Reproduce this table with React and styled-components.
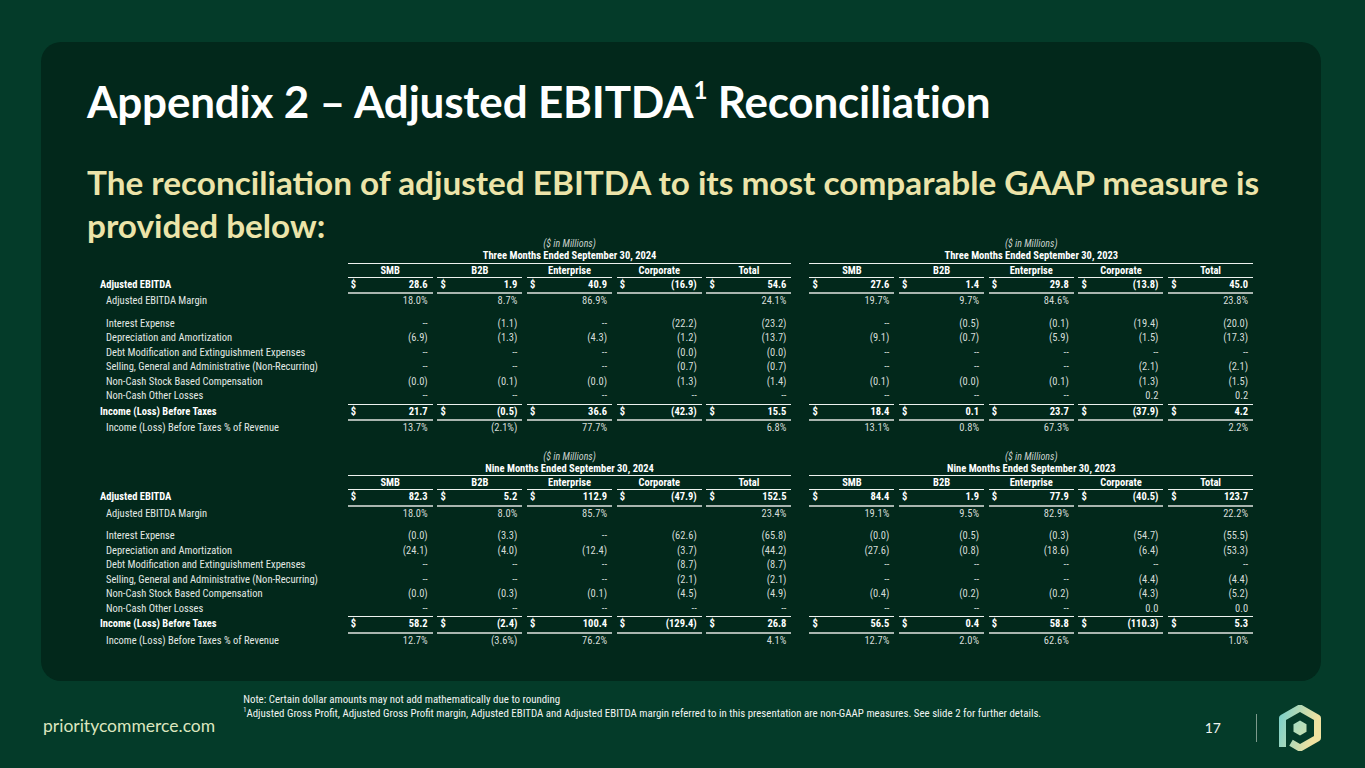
import React from 'react'
import styled, { createGlobalStyle } from 'styled-components'

const GlobalStyle = createGlobalStyle`
  html, body {
    margin: 0;
    padding: 0;
    background: #043b29;
  }
  body {
    font-family: "Lato", "Liberation Sans", sans-serif;
  }
`

const Page = styled.div`
  width: 1365px;
  height: 768px;
  display: flex;
  flex-direction: column;
  background: #043b29;
  overflow: hidden;
`

const Panel = styled.section`
  margin: 42px 44px 0 41px;
  height: 639px;
  box-sizing: border-box;
  padding: 33px 0 0 46px;
  border-radius: 20px;
  background: #02281b;
  display: flex;
  flex-direction: column;
`

const Title = styled.h1`
  margin: 0;
  font-family: "Lato", sans-serif;
  font-weight: 700;
  font-size: 44px;
  line-height: 52px;
  color: #ffffff;
  letter-spacing: -0.2px;
`

const Sup = styled.sup`
  font-size: 0.55em;
  line-height: 0;
  position: relative;
  top: -0.15em;
`

const Subtitle = styled.h2`
  margin: 34px 0 0;
  font-family: "Lato", sans-serif;
  font-weight: 700;
  font-size: 33.3px;
  line-height: 43px;
  color: #ece4a9;
  white-space: nowrap;
`

const Tables = styled.div`
  margin: -10px 0 0 13px;
  display: flex;
  flex-direction: column;
  gap: 14px;
`

const Grid = styled.div`
  display: grid;
  grid-template-columns: 243px repeat(5, 85px) 8.6px repeat(5, 85px);
  column-gap: 4.7px;
  font-family: "Liberation Sans Narrow", "Roboto Condensed", "Liberation Sans", sans-serif;
  font-size: 10.5px;
  color: #d5dcd8;
`

const groupColumn = { a: '2 / span 5', b: '8 / span 5' }

const Caption = styled.div`
  grid-column: ${p => groupColumn[p.$group]};
  text-align: center;
  font-style: italic;
  font-size: 10px;
  line-height: 13px;
  color: #c9d1cc;
`

const Period = styled.div`
  grid-column: ${p => groupColumn[p.$group]};
  text-align: center;
  font-weight: 700;
  line-height: 12.5px;
  color: #ffffff;
  border-bottom: 1px solid #eef2ef;
`

const ColHead = styled.div`
  text-align: center;
  font-weight: 700;
  line-height: 13px;
  color: #ffffff;
  border-bottom: 1px solid #eef2ef;
`

const Label = styled.div`
  grid-column: 1;
  line-height: 14.5px;
  padding-left: ${p => (p.$bold ? '0' : '6px')};
  font-weight: ${p => (p.$bold ? 700 : 400)};
  color: ${p => (p.$bold ? '#ffffff' : '#e3e8e5')};
  white-space: nowrap;
  border-top: ${p => (p.$top ? '1px solid transparent' : 'none')};
  border-bottom: ${p => (p.$thick ? '2px solid transparent' : 'none')};
`

const Value = styled.div`
  display: flex;
  justify-content: space-between;
  line-height: 14.5px;
  padding: 0 5px 0 3px;
  font-weight: ${p => (p.$bold ? 700 : 400)};
  color: ${p => (p.$bold ? '#ffffff' : '#d5dcd8')};
  border-top: ${p => (p.$top ? '1px solid #eef2ef' : 'none')};
  border-bottom: ${p => (p.$thick ? '2px solid #a9b5af' : 'none')};
`

const Gutter = styled.div`
  border-top: ${p => (p.$top ? '1px solid transparent' : 'none')};
  border-bottom: ${p => (p.$thick ? '2px solid transparent' : 'none')};
`

const Spacer = styled.div`
  grid-column: 1 / -1;
  height: 8px;
`

const Footer = styled.footer`
  flex: 1;
  display: flex;
  align-items: center;
  padding: 0 43px 0 43px;
`

const Site = styled.div`
  font-family: "Lato", sans-serif;
  font-size: 17.5px;
  color: #dce6bf;
  margin-right: 28px;
  padding-top: 2px;
`

const Note = styled.div`
  align-self: flex-start;
  margin-top: 12px;
  font-family: "Liberation Sans Narrow", "Roboto Condensed", "Liberation Sans", sans-serif;
  font-size: 10.9px;
  line-height: 14px;
  color: #f1f4f2;
`

const NoteSup = styled.sup`
  font-size: 6.5px;
  line-height: 0;
`

const PageInfo = styled.div`
  margin-left: auto;
  display: flex;
  align-items: center;
  padding-top: 6px;
`

const PageNumber = styled.span`
  font-family: "Lato", sans-serif;
  font-size: 14px;
  color: #eef3ef;
`

const Divider = styled.span`
  width: 1px;
  height: 28px;
  background: #7d9a8c;
  margin: 0 21px 0 35px;
`

const columns = ['SMB', 'B2B', 'Enterprise', 'Corporate', 'Total']

const dash = '--'

const quarter = {
  periods: ['Three Months Ended September 30, 2024', 'Three Months Ended September 30, 2023'],
  rows: [
    { label: 'Adjusted EBITDA', bold: true, dollar: true, thick: true,
      a: ['28.6', '1.9', '40.9', '(16.9)', '54.6'], b: ['27.6', '1.4', '29.8', '(13.8)', '45.0'] },
    { label: 'Adjusted EBITDA Margin',
      a: ['18.0%', '8.7%', '86.9%', '', '24.1%'], b: ['19.7%', '9.7%', '84.6%', '', '23.8%'] },
    { spacer: true },
    { label: 'Interest Expense',
      a: [dash, '(1.1)', dash, '(22.2)', '(23.2)'], b: [dash, '(0.5)', '(0.1)', '(19.4)', '(20.0)'] },
    { label: 'Depreciation and Amortization',
      a: ['(6.9)', '(1.3)', '(4.3)', '(1.2)', '(13.7)'], b: ['(9.1)', '(0.7)', '(5.9)', '(1.5)', '(17.3)'] },
    { label: 'Debt Modification and Extinguishment Expenses',
      a: [dash, dash, dash, '(0.0)', '(0.0)'], b: [dash, dash, dash, dash, dash] },
    { label: 'Selling, General and Administrative (Non-Recurring)',
      a: [dash, dash, dash, '(0.7)', '(0.7)'], b: [dash, dash, dash, '(2.1)', '(2.1)'] },
    { label: 'Non-Cash Stock Based Compensation',
      a: ['(0.0)', '(0.1)', '(0.0)', '(1.3)', '(1.4)'], b: ['(0.1)', '(0.0)', '(0.1)', '(1.3)', '(1.5)'] },
    { label: 'Non-Cash Other Losses',
      a: [dash, dash, dash, dash, dash], b: [dash, dash, dash, '0.2', '0.2'] },
    { label: 'Income (Loss) Before Taxes', bold: true, dollar: true, top: true, thick: true,
      a: ['21.7', '(0.5)', '36.6', '(42.3)', '15.5'], b: ['18.4', '0.1', '23.7', '(37.9)', '4.2'] },
    { label: 'Income (Loss) Before Taxes % of Revenue',
      a: ['13.7%', '(2.1%)', '77.7%', '', '6.8%'], b: ['13.1%', '0.8%', '67.3%', '', '2.2%'] }
  ]
}

const nineMonths = {
  periods: ['Nine Months Ended September 30, 2024', 'Nine Months Ended September 30, 2023'],
  rows: [
    { label: 'Adjusted EBITDA', bold: true, dollar: true, thick: true,
      a: ['82.3', '5.2', '112.9', '(47.9)', '152.5'], b: ['84.4', '1.9', '77.9', '(40.5)', '123.7'] },
    { label: 'Adjusted EBITDA Margin',
      a: ['18.0%', '8.0%', '85.7%', '', '23.4%'], b: ['19.1%', '9.5%', '82.9%', '', '22.2%'] },
    { spacer: true },
    { label: 'Interest Expense',
      a: ['(0.0)', '(3.3)', dash, '(62.6)', '(65.8)'], b: ['(0.0)', '(0.5)', '(0.3)', '(54.7)', '(55.5)'] },
    { label: 'Depreciation and Amortization',
      a: ['(24.1)', '(4.0)', '(12.4)', '(3.7)', '(44.2)'], b: ['(27.6)', '(0.8)', '(18.6)', '(6.4)', '(53.3)'] },
    { label: 'Debt Modification and Extinguishment Expenses',
      a: [dash, dash, dash, '(8.7)', '(8.7)'], b: [dash, dash, dash, dash, dash] },
    { label: 'Selling, General and Administrative (Non-Recurring)',
      a: [dash, dash, dash, '(2.1)', '(2.1)'], b: [dash, dash, dash, '(4.4)', '(4.4)'] },
    { label: 'Non-Cash Stock Based Compensation',
      a: ['(0.0)', '(0.3)', '(0.1)', '(4.5)', '(4.9)'], b: ['(0.4)', '(0.2)', '(0.2)', '(4.3)', '(5.2)'] },
    { label: 'Non-Cash Other Losses',
      a: [dash, dash, dash, dash, dash], b: [dash, dash, dash, '0.0', '0.0'] },
    { label: 'Income (Loss) Before Taxes', bold: true, dollar: true, top: true, thick: true,
      a: ['58.2', '(2.4)', '100.4', '(129.4)', '26.8'], b: ['56.5', '0.4', '58.8', '(110.3)', '5.3'] },
    { label: 'Income (Loss) Before Taxes % of Revenue',
      a: ['12.7%', '(3.6%)', '76.2%', '', '4.1%'], b: ['12.7%', '2.0%', '62.6%', '', '1.0%'] }
  ]
}

function ValueCells({ row, values }) {
  return values.map((v, i) => (
    <Value key={i} $bold={row.bold} $top={row.top} $thick={row.thick}>
      <span>{row.dollar ? '$' : ''}</span>
      <span>{v}</span>
    </Value>
  ))
}

function ReconTable({ data }) {
  return (
    <Grid>
      <Caption $group="a">($ in Millions)</Caption>
      <Caption $group="b">($ in Millions)</Caption>
      <Period $group="a">{data.periods[0]}</Period>
      <Period $group="b">{data.periods[1]}</Period>

      <div />
      {columns.map(c => <ColHead key={'a' + c}>{c}</ColHead>)}
      <div />
      {columns.map(c => <ColHead key={'b' + c}>{c}</ColHead>)}

      {data.rows.map((row, i) =>
        row.spacer ? (
          <Spacer key={i} />
        ) : (
          <React.Fragment key={i}>
            <Label $bold={row.bold} $top={row.top} $thick={row.thick}>{row.label}</Label>
            <ValueCells row={row} values={row.a} />
            <Gutter $top={row.top} $thick={row.thick} />
            <ValueCells row={row} values={row.b} />
          </React.Fragment>
        )
      )}
    </Grid>
  )
}

function Logo() {
  return (
    <svg width="44" height="46" viewBox="0 0 44 46">
      <defs>
        <linearGradient id="pc-grad" x1="0" y1="0" x2="1" y2="0.3">
          <stop offset="0" stopColor="#7fd1c8" />
          <stop offset="1" stopColor="#f1e2a0" />
        </linearGradient>
        <linearGradient id="pc-core" x1="0" y1="0" x2="1" y2="1">
          <stop offset="0" stopColor="#a6dcc3" />
          <stop offset="1" stopColor="#c8e0b0" />
        </linearGradient>
      </defs>
      <path
        d="M4.5 42 L4.5 13 L22 3 L39.5 13 L39.5 33 L22 43 L13 37.8"
        fill="none"
        stroke="url(#pc-grad)"
        strokeWidth="7"
        strokeLinejoin="round"
      />
      <path d="M22 15.5 L28.5 19.2 L28.5 26.8 L22 30.5 L15.5 26.8 L15.5 19.2 Z" fill="url(#pc-core)" />
    </svg>
  )
}

export default function App() {
  return (
    <Page>
      <GlobalStyle />
      <Panel>
        <Title>
          Appendix 2 – Adjusted EBITDA<Sup>1</Sup> Reconciliation
        </Title>
        <Subtitle>
          The reconciliation of adjusted EBITDA to its most comparable GAAP measure is
          <br />
          provided below:
        </Subtitle>
        <Tables>
          <ReconTable data={quarter} />
          <ReconTable data={nineMonths} />
        </Tables>
      </Panel>
      <Footer>
        <Site>prioritycommerce.com</Site>
        <Note>
          Note: Certain dollar amounts may not add mathematically due to rounding
          <br />
          <NoteSup>1</NoteSup>Adjusted Gross Profit, Adjusted Gross Profit margin, Adjusted EBITDA and
          Adjusted EBITDA margin referred to in this presentation are non-GAAP measures. See slide 2 for further details.
        </Note>
        <PageInfo>
          <PageNumber>17</PageNumber>
          <Divider />
          <Logo />
        </PageInfo>
      </Footer>
    </Page>
  )
}
